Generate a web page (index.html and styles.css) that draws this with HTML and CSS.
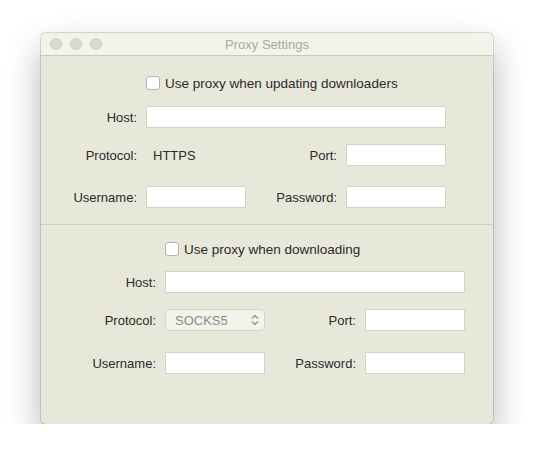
FILE: index.html
```html
<!DOCTYPE html>
<html>
<head lang="en">
    <meta charset="UTF-8">
    <title>Proxy Settings</title>
    <link rel="stylesheet" href="styles.css">
</head>
<body>
<div class="window">
    <div class="titlebar">
        <div class="lights">
            <span class="light"></span>
            <span class="light"></span>
            <span class="light"></span>
        </div>
        <div class="title">Proxy Settings</div>
    </div>

    <div class="section first">
        <div class="check-row">
            <span class="checkbox"></span>
            <span>Use proxy when updating downloaders</span>
        </div>
        <div class="grid">
            <label class="lbl">Host:</label>
            <div class="field wide"></div>

            <label class="lbl">Protocol:</label>
            <div class="static">HTTPS</div>
            <label class="lbl">Port:</label>
            <div class="field"></div>

            <label class="lbl row3">Username:</label>
            <div class="field row3"></div>
            <label class="lbl row3">Password:</label>
            <div class="field row3"></div>
        </div>
    </div>

    <div class="section second">
        <div class="check-row">
            <span class="checkbox"></span>
            <span>Use proxy when downloading</span>
        </div>
        <div class="grid">
            <label class="lbl">Host:</label>
            <div class="field wide"></div>

            <label class="lbl">Protocol:</label>
            <div class="select">
                <span>SOCKS5</span>
                <svg class="arrows" width="8" height="12" viewBox="0 0 8 12">
                    <path d="M1 4.5 L4 1.5 L7 4.5 M1 7.5 L4 10.5 L7 7.5" fill="none" stroke="#8a8a84" stroke-width="1.2"/>
                </svg>
            </div>
            <label class="lbl">Port:</label>
            <div class="field"></div>

            <label class="lbl row3">Username:</label>
            <div class="field row3"></div>
            <label class="lbl row3">Password:</label>
            <div class="field row3"></div>
        </div>
    </div>
</div>
</body>
</html>
```

FILE: styles.css
```css
* {
    margin: 0;
    padding: 0;
    box-sizing: border-box;
}

body {
    background: #fff;
    font-family: "Liberation Sans", Arial, sans-serif;
    font-size: 13px;
    color: #2a2a2a;
}

.window {
    width: 452px;
    height: 391px;
    margin: 33px 0 0 41px;
    background: #e8e8da;
    border-radius: 5px;
    overflow: hidden;
    box-shadow: 0 0 0 1px rgba(0, 0, 0, 0.13), 0 16px 34px rgba(0, 0, 0, 0.3);
    display: flex;
    flex-direction: column;
}

.titlebar {
    height: 23px;
    flex-shrink: 0;
    background: #f3f3e9;
    border-bottom: 1px solid #c9c9bd;
    display: flex;
    align-items: center;
    position: relative;
}

.lights {
    display: flex;
    gap: 8px;
    padding-left: 9px;
}

.light {
    width: 12px;
    height: 12px;
    border-radius: 50%;
    background: #dadad0;
    border: 1px solid #cfcfc5;
}

.title {
    position: absolute;
    left: 0;
    right: 0;
    top: 4px;
    text-align: center;
    color: #a8a8a0;
}

.section {
    flex-shrink: 0;
}

.section.first {
    padding-top: 16px;
    padding-bottom: 16px;
    border-bottom: 1px solid #cdcdc1;
}

.section.second {
    padding-top: 13px;
    padding-left: 19px;
}

.check-row {
    height: 22px;
    display: flex;
    align-items: center;
    padding-left: 105px;
    gap: 5px;
    font-size: 13.5px;
}

.checkbox {
    width: 14px;
    height: 14px;
    background: #fff;
    border: 1px solid #b3b3ab;
    border-radius: 3px;
}

.grid {
    display: grid;
    grid-template-columns: 96px 100px 82px 100px;
    grid-template-rows: 22px 22px 26px;
    column-gap: 9px;
    row-gap: 16px;
    margin-top: 12px;
}

.second .grid {
    grid-template-rows: 22px 22px 27px;
    margin-top: 11px;
}

.grid .row3 {
    align-self: end;
    height: 22px;
}

.lbl {
    display: flex;
    align-items: center;
    justify-content: flex-end;
}

.static {
    display: flex;
    align-items: center;
    padding-left: 7px;
}

.field {
    background: #fff;
    border: 1px solid #d2d2c8;
    height: 22px;
}

.field.wide {
    grid-column: 2 / 5;
}

.select {
    height: 22px;
    border: 1px solid #d6d6cb;
    border-radius: 4px;
    background: #f3f3eb;
    color: #8d8d88;
    display: flex;
    align-items: center;
    justify-content: space-between;
    padding: 0 5px 0 9px;
}
```
